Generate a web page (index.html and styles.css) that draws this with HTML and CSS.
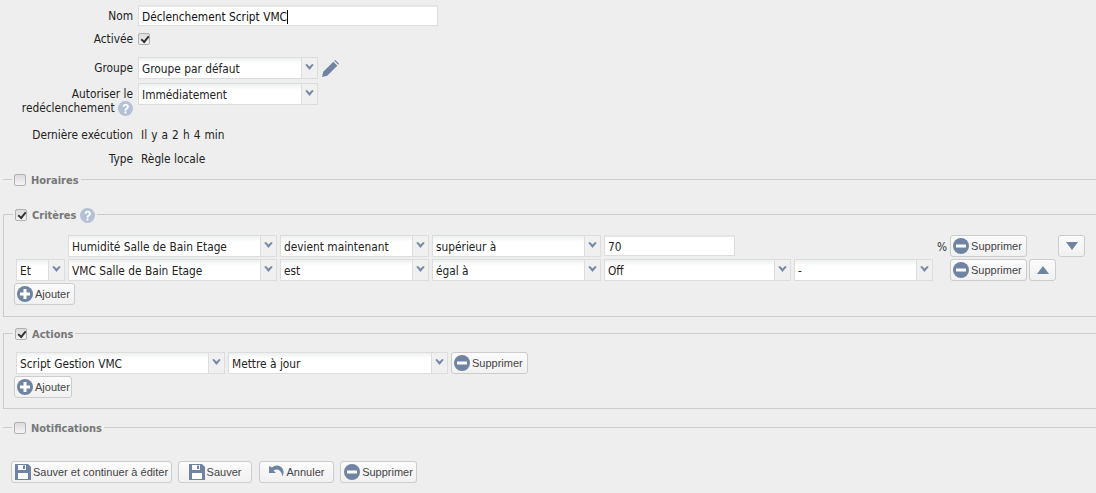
FILE: index.html
```html
<!DOCTYPE html>
<html lang="fr">
<head>
<meta charset="utf-8">
<title>Règle</title>
<link rel="stylesheet" href="styles.css">
</head>
<body>
<svg class="sprite" width="0" height="0" aria-hidden="true">
  <symbol id="i-minus" viewBox="0 0 16 16"><circle cx="8" cy="8" r="8"/><rect x="3" y="6.500" width="10" height="3" fill="#fff"/></symbol>
  <symbol id="i-plus" viewBox="0 0 16 16"><circle cx="8" cy="8" r="8"/><path d="M6.500 3h3v3.500H13v3H9.500V13h-3V9.500H3v-3h3.500z" fill="#fff"/></symbol>
  <symbol id="i-save" viewBox="0 0 16 16"><path d="M0 0h13l3 3v13H0z"/><rect x="3" y="1" width="8" height="5" fill="#fff"/><rect x="8" y="1.500" width="2" height="3.500"/><rect x="3" y="9" width="10" height="6" fill="#fff"/></symbol>
  <symbol id="i-undo" viewBox="0 0 16 16"><path d="M0 2v7h7L4.500 6.500C7 4.500 11.500 5 13 10.500l.5 2C16.500 7 13 1.500 8 1.500 6 1.500 4.500 2.300 3 3.500z"/></symbol>
  <symbol id="i-pencil" viewBox="0 0 18 18"><path d="M0 18l1.300-5.500L12 1.800 16.200 6 5.500 16.700z"/><path d="M13 .8l1-.8 4 4-.8 1z"/></symbol>
  <symbol id="i-help" viewBox="0 0 16 16"><circle cx="8" cy="8" r="8"/><path d="M5 6c0-4 6.500-4 6.500 0 0 2.500-2.700 2.500-2.700 4.300H7C7 7.500 9.400 7.500 9.400 6 9.400 4.500 7 4.500 7 6.200zM7 11.300h1.900v2H7z" fill="#fff"/></symbol>
  <symbol id="i-chev" viewBox="0 0 10 7"><path d="M0 1l2-1 3 3 3-3 2 1-5 6z"/></symbol>
</svg>

<form class="page">
  <div class="field">
    <label class="field-label">Nom</label>
    <div class="text-input name-input">Déclenchement Script VMC<span class="caret"></span></div>
  </div>
  <div class="field field-check">
    <label class="field-label">Activée</label>
    <span class="check checked"></span>
  </div>
  <div class="field field-group">
    <label class="field-label">Groupe</label>
    <div class="combo w-180"><span class="combo-value">Groupe par défaut</span><span class="combo-arrow"><svg class="chev"><use href="#i-chev"/></svg></span></div>
    <svg class="icon-pencil"><use href="#i-pencil"/></svg>
  </div>
  <div class="field field-retrigger">
    <label class="field-label">Autoriser le<br>redéclenchement <svg class="icon-help"><use href="#i-help"/></svg></label>
    <div class="combo w-180"><span class="combo-value">Immédiatement</span><span class="combo-arrow"><svg class="chev"><use href="#i-chev"/></svg></span></div>
  </div>
  <div class="field field-static">
    <label class="field-label">Dernière exécution</label>
    <span class="static static-time">Il y a 2 h 4 min</span>
  </div>
  <div class="field field-static field-type">
    <label class="field-label">Type</label>
    <span class="static">Règle locale</span>
  </div>

  <fieldset class="section collapsed s-horaires">
    <legend><span class="check"></span>Horaires</legend>
  </fieldset>

  <fieldset class="section s-criteres">
    <legend><span class="check checked"></span>Critères <svg class="icon-help"><use href="#i-help"/></svg></legend>
    <div class="row row-first">
      <div class="combo w-209"><span class="combo-value">Humidité Salle de Bain Etage</span><span class="combo-arrow"><svg class="chev"><use href="#i-chev"/></svg></span></div>
      <div class="combo w-149"><span class="combo-value">devient maintenant</span><span class="combo-arrow"><svg class="chev"><use href="#i-chev"/></svg></span></div>
      <div class="combo w-169"><span class="combo-value">supérieur à</span><span class="combo-arrow"><svg class="chev"><use href="#i-chev"/></svg></span></div>
      <div class="text-input value-input">70</div>
      <span class="unit">%</span>
      <button type="button" class="btn btn-del"><svg class="btn-icon"><use href="#i-minus"/></svg>Supprimer</button>
      <button type="button" class="btn btn-move btn-down"><span class="tri tri-down"></span></button>
    </div>
    <div class="row">
      <div class="combo w-49"><span class="combo-value">Et</span><span class="combo-arrow"><svg class="chev"><use href="#i-chev"/></svg></span></div>
      <div class="combo w-209"><span class="combo-value">VMC Salle de Bain Etage</span><span class="combo-arrow"><svg class="chev"><use href="#i-chev"/></svg></span></div>
      <div class="combo w-149"><span class="combo-value">est</span><span class="combo-arrow"><svg class="chev"><use href="#i-chev"/></svg></span></div>
      <div class="combo w-169"><span class="combo-value">égal à</span><span class="combo-arrow"><svg class="chev"><use href="#i-chev"/></svg></span></div>
      <div class="combo w-187"><span class="combo-value">Off</span><span class="combo-arrow"><svg class="chev"><use href="#i-chev"/></svg></span></div>
      <div class="combo w-139"><span class="combo-value">-</span><span class="combo-arrow"><svg class="chev"><use href="#i-chev"/></svg></span></div>
      <button type="button" class="btn btn-del btn-del-second"><svg class="btn-icon"><use href="#i-minus"/></svg>Supprimer</button>
      <button type="button" class="btn btn-move"><span class="tri tri-up"></span></button>
    </div>
    <button type="button" class="btn btn-add"><svg class="btn-icon"><use href="#i-plus"/></svg>Ajouter</button>
  </fieldset>

  <fieldset class="section s-actions">
    <legend><span class="check checked"></span>Actions</legend>
    <div class="row">
      <div class="combo w-209"><span class="combo-value">Script Gestion VMC</span><span class="combo-arrow"><svg class="chev"><use href="#i-chev"/></svg></span></div>
      <div class="combo w-220"><span class="combo-value">Mettre à jour</span><span class="combo-arrow"><svg class="chev"><use href="#i-chev"/></svg></span></div>
      <button type="button" class="btn btn-del"><svg class="btn-icon"><use href="#i-minus"/></svg>Supprimer</button>
    </div>
    <button type="button" class="btn btn-add btn-add-small"><svg class="btn-icon"><use href="#i-plus"/></svg>Ajouter</button>
  </fieldset>

  <fieldset class="section collapsed s-notif">
    <legend><span class="check"></span>Notifications</legend>
  </fieldset>

  <div class="footer">
    <button type="button" class="btn btn-center btn-continue"><svg class="btn-icon"><use href="#i-save"/></svg>Sauver et continuer à éditer</button>
    <button type="button" class="btn btn-center btn-save"><svg class="btn-icon"><use href="#i-save"/></svg>Sauver</button>
    <button type="button" class="btn btn-center btn-cancel"><svg class="btn-icon"><use href="#i-undo"/></svg>Annuler</button>
    <button type="button" class="btn btn-center btn-delete"><svg class="btn-icon"><use href="#i-minus"/></svg>Supprimer</button>
  </div>
</form>
</body>
</html>
```
FILE: styles.css
```css
* { box-sizing: border-box; }
html, body { margin: 0; padding: 0; height: 100%; overflow: hidden; }
body {
  background: #eee;
  color: #222;
  font-family: "DejaVu Sans Condensed", "DejaVu Sans", sans-serif;
  font-stretch: condensed;
  font-size: 11.8px;
  line-height: 14px;
}
.sprite { position: absolute; }
.page { display: block; padding: 5px 0 0; }

.field { display: flex; align-items: flex-start; gap: 5px; }
.field-label { width: 133px; flex: none; text-align: right; padding-top: 4px; color: #222; }
.field-check { margin-top: 6px; height: 25px; }
.field-check .field-label { padding-top: 0; }
.field-check .check { margin-top: 1px; }
.field-group { height: 26px; }
.field-retrigger { height: 44px; }
.field-static { height: 24px; padding-top: 1px; }
.field-static .field-label { padding-top: 0; }
.static { color: #222; padding-left: 3px; }
.static-time { word-spacing: 0.7px; }

.text-input {
  height: 21px;
  background: #fff;
  border: 1px solid #ddd;
  border-top: 2px solid #e4e6e6;
  padding: 3px 3px 0;
  white-space: nowrap;
}
.name-input { width: 300px; color: #111; }
.value-input { width: 131px; }
.caret { display: inline-block; width: 1px; height: 14px; background: #000; vertical-align: -3px; }

.combo {
  display: flex;
  height: 22px;
  flex: none;
  border: 1px solid #ddd;
  background: #f4f4f4;
}
.combo-value {
  flex: 1;
  min-width: 0;
  background: linear-gradient(#eef0f0, #fff 6px);
  padding: 4px 3px 0;
  white-space: nowrap;
  overflow: hidden;
  color: #222;
}
.combo-arrow { width: 16px; flex: none; display: flex; align-items: center; justify-content: center; border-left: 1px solid #ddd; background: #f0f0f0; }
.chev { width: 9px; height: 6px; fill: #7588a6; margin-top: -3px; }
.w-49 { width: 49px; }
.w-139 { width: 139px; }
.w-149 { width: 149px; }
.w-169 { width: 169px; }
.w-180 { width: 180px; }
.w-187 { width: 187px; }
.w-209 { width: 209px; }
.w-220 { width: 220px; }

.check {
  display: inline-block;
  width: 12px;
  height: 12px;
  border: 1px solid #b0b0b0;
  border-radius: 2px;
  background: linear-gradient(#dcdcdc, #f4f4f4);
  position: relative;
  flex: none;
}
.check.checked::after {
  content: "";
  position: absolute;
  left: 2px;
  top: 1.5px;
  width: 6px;
  height: 3px;
  border-left: 2px solid #333;
  border-bottom: 2px solid #333;
  transform: rotate(-50deg);
}

.icon-pencil { width: 17px; height: 17px; fill: #6f83a3; margin: 3px 0 0 -1px; }
.icon-help { display: inline-block; width: 15px; height: 15px; fill: #b4c0d4; vertical-align: -4px; }

.section {
  margin: 0 -10px 0 3px;
  padding: 0 0 0 11px;
  border: 1px solid #ccc;
  min-width: 0;
}
.section legend {
  margin-left: -2px;
  padding: 0 2px;
  font-weight: bold;
  color: #777;
  font-size: 11px;
  height: 15px;
  line-height: 17px;
}
.section legend .check { margin-right: 5px; vertical-align: -2px; }
.collapsed { border-width: 1px 0 0; height: 8px; }
.s-horaires { margin-top: -3px; }
.s-criteres { margin-top: 20px; height: 110px; padding-top: 13px; padding-left: 12px; }
.s-actions { margin-top: 9px; height: 83px; padding-top: 11px; padding-left: 12px; }
.s-criteres legend { margin-left: -3px; }
.s-actions legend { margin-left: -3px; }
.s-notif { margin-top: 11px; }

.row { display: flex; align-items: flex-start; gap: 3px; height: 24px; }
.row-first { padding-left: 52px; }

.unit { margin-left: 199px; padding-top: 5px; color: #333; }
.btn {
  display: inline-flex;
  align-items: center;
  height: 22px;
  padding: 0 5px 0 2px;
  border: 1px solid #ccc;
  border-radius: 3px;
  background: linear-gradient(#fbfbfb, #f1f1f1);
  font-family: "Liberation Sans", Arial, sans-serif;
  font-stretch: normal;
  font-size: 11px;
  color: #444;
  white-space: nowrap;
  flex: none;
  gap: 2px;
}
.btn-center { justify-content: center; padding: 0; }
.btn-icon { width: 16px; height: 16px; fill: #6f83a3; flex: none; }
.btn-del { width: 77px; }
.btn-del-second { margin-left: 14px; }
.btn-move { width: 27px; justify-content: center; padding: 0; margin-left: 28px; }
.row .btn-del-second + .btn-move { margin-left: -1px; }
.tri { width: 0; height: 0; border-left: 6px solid transparent; border-right: 6px solid transparent; }
.tri-down { border-top: 8px solid #6f83a3; }
.tri-up { border-bottom: 8px solid #6f83a3; }
.btn-add { width: 61px; margin-left: -2px; }
.btn-add-small { width: 58px; margin-left: -2px; }

.footer { display: flex; gap: 6px; padding: 26px 0 0 11px; }
.btn-continue { width: 161px; }
.btn-save { width: 74px; }
.btn-cancel { width: 75px; margin-left: 1px; }
.btn-delete { width: 77px; }
```
